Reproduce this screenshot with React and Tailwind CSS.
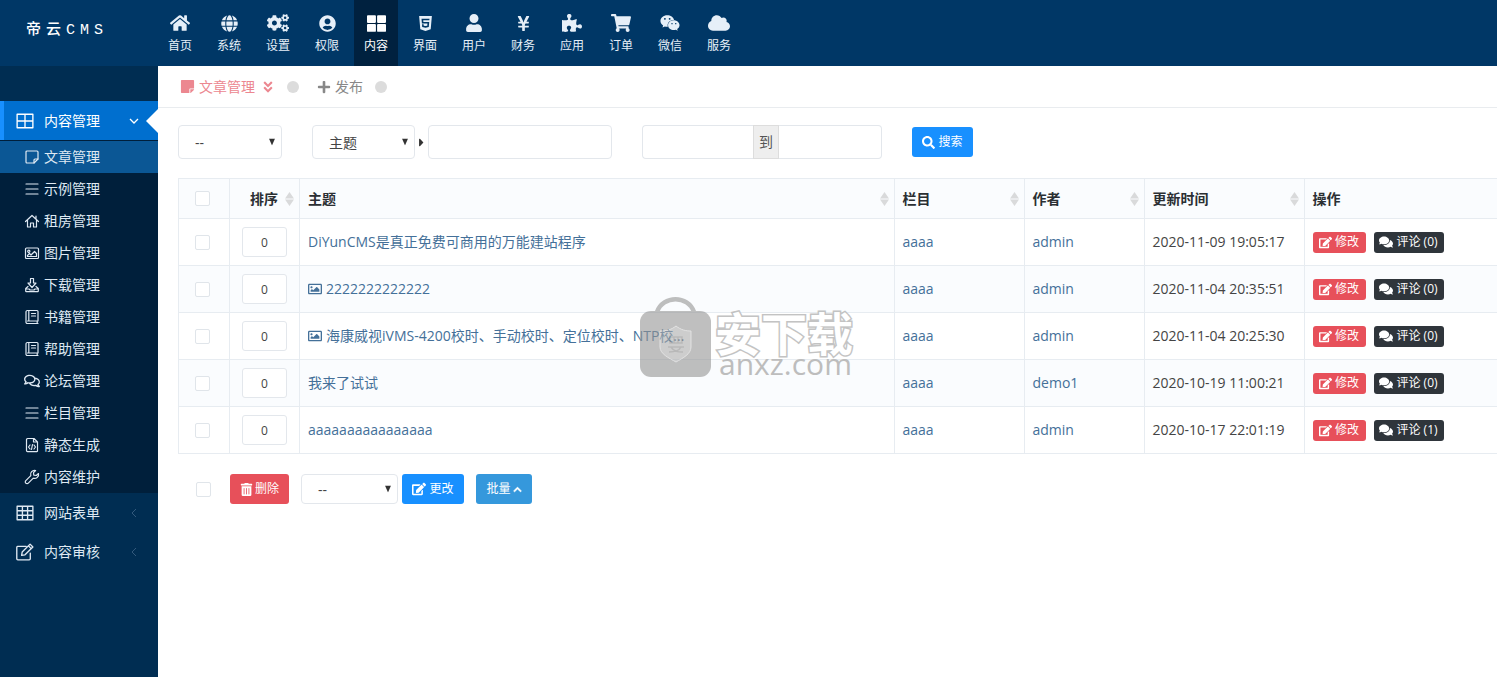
import {
  FaCaretRight,
  FaChevronUp,
  FaCloud,
  FaCogs,
  FaComments,
  FaEdit,
  FaGlobe,
  FaHome,
  FaHtml5,
  FaPlus,
  FaPuzzlePiece,
  FaRegComments,
  FaRegImage,
  FaSearch,
  FaShoppingCart,
  FaStickyNote,
  FaThLarge,
  FaTrashAlt,
  FaUser,
  FaUserCircle,
  FaWeixin,
  FaYenSign,
  FaAngleDoubleDown,
} from "react-icons/fa";

const navItems = [
  { icon: <FaHome size={20} />, label: "首页" },
  { icon: <FaGlobe size={17} />, label: "系统" },
  { icon: <FaCogs size={22} />, label: "设置" },
  { icon: <FaUserCircle size={17} />, label: "权限" },
  { icon: <FaThLarge size={19} />, label: "内容", active: true },
  { icon: <FaHtml5 size={17} />, label: "界面" },
  { icon: <FaUser size={18} />, label: "用户" },
  { icon: <FaYenSign size={17} />, label: "财务" },
  { icon: <FaPuzzlePiece size={20} />, label: "应用" },
  { icon: <FaShoppingCart size={20} />, label: "订单" },
  { icon: <FaWeixin size={20} />, label: "微信" },
  { icon: <FaCloud size={22} />, label: "服务" },
];

function LineIcon({ size = 16, children }) {
  return (
    <svg
      width={size}
      height={size}
      viewBox="0 0 16 16"
      fill="none"
      stroke="currentColor"
      strokeWidth="1.2"
      strokeLinecap="round"
      strokeLinejoin="round"
      aria-hidden="true"
    >
      {children}
    </svg>
  );
}

const noteIcon = (
  <LineIcon>
    <path d="M3 2h10a1 1 0 0 1 1 1v7l-4 4H3a1 1 0 0 1-1-1V3a1 1 0 0 1 1-1z" />
    <path d="M14 10h-3a1 1 0 0 0-1 1v3" />
  </LineIcon>
);

const barsIcon = (
  <LineIcon>
    <path d="M2 3h12M2 8h12M2 13h12" />
  </LineIcon>
);

const houseIcon = (
  <LineIcon>
    <path d="M1.5 8.5 8 2.5l6.500 6M12 3v3M3.500 7v7H6.500v-4h3v4h3V7" />
  </LineIcon>
);

const imageIcon = (
  <LineIcon>
    <rect x="1.500" y="3" width="13" height="10.500" rx="1" />
    <circle cx="4.800" cy="6.200" r="1.100" />
    <path d="M3.500 11.500v-1l2-2 1.500 1.500 3.500-3.500 2 2v3z" />
  </LineIcon>
);

const downloadIcon = (
  <LineIcon>
    <path d="M6.500 1.500h3V6H12l-4 4.500L4 6h2.500z" />
    <path d="M4 9.500 1.700 11.500V14a.6.6 0 0 0 .6.6h11.400a.6.6 0 0 0 .6-.6v-2.500L12 9.500M2 12h3l1 1h4l1-1h3" />
  </LineIcon>
);

const bookIcon = (
  <LineIcon>
    <path d="M3.500 1.500H13a1 1 0 0 1 1 1v9.500H3.500M3.500 1.500A1.500 1.500 0 0 0 2 3v9.500a1.500 1.500 0 0 0 1.500 2H14M13.200 12v2.500M4.800 1.500V12M7.500 4.500h4M7.500 7h4" />
  </LineIcon>
);

const fileCodeIcon = (
  <LineIcon>
    <path d="M3.500 1.500H10l3.500 3.500v9a.6.6 0 0 1-.6.6H3.500a1 1 0 0 1-1-1v-11a1 1 0 0 1 1-1zM9.500 1.500V5h4" />
    <path d="m6 8-1.500 2L6 12M8.500 7.500l-1 5M10 8l1.500 2-1.500 2" />
  </LineIcon>
);

const wrenchIcon = (
  <LineIcon>
    <path d="M14.500 4.500 12.300 6.500 9.800 6.200 9.500 3.700 11.600 1.500A4 4 0 0 0 6.800 6.700L1.800 11.700a1.700 1.700 0 0 0 2.500 2.500l5-5A4 4 0 0 0 14.500 4.500z" />
  </LineIcon>
);

const subItems = [
  { icon: noteIcon, label: "文章管理", active: true },
  { icon: barsIcon, label: "示例管理" },
  { icon: houseIcon, label: "租房管理" },
  { icon: imageIcon, label: "图片管理" },
  { icon: downloadIcon, label: "下载管理" },
  { icon: bookIcon, label: "书籍管理" },
  { icon: bookIcon, label: "帮助管理" },
  { icon: <FaRegComments size={16} />, label: "论坛管理" },
  { icon: barsIcon, label: "栏目管理" },
  { icon: fileCodeIcon, label: "静态生成" },
  { icon: wrenchIcon, label: "内容维护" },
];

const rows = [
  { title: "DiYunCMS是真正免费可商用的万能建站程序", author: "admin", time: "2020-11-09 19:05:17", comments: 0 },
  { title: "2222222222222", image: true, author: "admin", time: "2020-11-04 20:35:51", comments: 0 },
  { title: "海康威视iVMS-4200校时、手动校时、定位校时、NTP校...", image: true, author: "admin", time: "2020-11-04 20:25:30", comments: 0 },
  { title: "我来了试试", author: "demo1", time: "2020-10-19 11:00:21", comments: 0 },
  { title: "aaaaaaaaaaaaaaaa", author: "admin", time: "2020-10-17 22:01:19", comments: 1 },
];

function Header() {
  return (
    <header className="flex h-[66px] bg-[#003766] text-[#e6eff8]">
      <a href="#" className="flex w-[158px] shrink-0 items-center pb-1 pl-[26px] font-['Liberation_Mono','Noto_Sans_CJK_SC',monospace] text-[15px] font-medium tracking-[5px] text-white">
        帝云CMS
      </a>
      <nav className="flex gap-[5px]">
        {navItems.map((item) => (
          <a
            key={item.label}
            href="#"
            className={
              item.active
                ? "flex w-11 flex-col items-center bg-[#00213f] pt-2.5 text-xs text-white"
                : "flex w-11 flex-col items-center pt-2.5 text-xs"
            }
          >
            <span className="flex h-[26px] items-center">{item.icon}</span>
            <span className="leading-5">{item.label}</span>
          </a>
        ))}
      </nav>
    </header>
  );
}

function SideGroup({ icon, label }) {
  return (
    <a href="#" className="flex h-[39px] items-center pl-4">
      <span className="w-7">{icon}</span>
      <span className="flex-1">{label}</span>
      <svg width="8" height="10" viewBox="0 0 8 10" fill="none" stroke="#33597c" className="mr-5" aria-hidden="true">
        <path d="M6 1 2 5l4 4" />
      </svg>
    </a>
  );
}

function Sidebar() {
  return (
    <aside className="w-[158px] shrink-0 bg-[#002d52] pt-[35px] text-sm text-[#dfe9f3]">
      <a href="#" className="relative flex h-[39px] items-center border-l-4 border-[#1890ff] bg-[#006fcf] pl-3 text-white">
        <span className="w-7">
          <LineIcon size={18}>
            <path d="M1 2h14v12H1zM8 2v12M1 8h14" />
          </LineIcon>
        </span>
        <span className="flex-1">内容管理</span>
        <svg width="10" height="8" viewBox="0 0 10 8" fill="none" stroke="currentColor" strokeWidth="1.300" className="mr-[19px]" aria-hidden="true">
          <path d="m1 2 4 4 4-4" />
        </svg>
        <svg width="12" height="24" viewBox="0 0 12 24" fill="#fff" className="absolute top-2 right-0" aria-hidden="true">
          <path d="M12 0 0 12l12 12z" />
        </svg>
      </a>
      <ul className="border-t border-[#001f3b] bg-[#001f3b]">
        {subItems.map((item) => (
          <li key={item.label}>
            <a
              href="#"
              className={
                item.active
                  ? "flex h-8 items-center gap-1 bg-[#0b5795] pl-6"
                  : "flex h-8 items-center gap-1 pl-6"
              }
            >
              {item.icon}
              {item.label}
            </a>
          </li>
        ))}
      </ul>
      <SideGroup
        label="网站表单"
        icon={
          <LineIcon size={18}>
            <path d="M1 2h14v12H1zM5.700 2v12M10.300 2v12M1 6h14M1 10h14" />
          </LineIcon>
        }
      />
      <SideGroup
        label="内容审核"
        icon={
          <LineIcon size={18}>
            <path d="M9 3H1.500A1 1 0 0 0 .7 4v10a1 1 0 0 0 1 1h10a1 1 0 0 0 1-1V9M5 11l.5-3L12.500 1l2.500 2.500-7 7zM11 2.500 13.500 5" />
          </LineIcon>
        }
      />
    </aside>
  );
}

function Select({ label, value, className }) {
  return (
    <div className={className}>
      <select
        aria-label={label}
        className="h-full w-full appearance-none rounded border border-[#e3e7ec] bg-white pt-0.5 pl-4 text-sm text-[#444]"
      >
        <option>{value}</option>
      </select>
      <svg width="6" height="7" viewBox="0 0 6 7" fill="#333" className="pointer-events-none absolute top-1/2 right-[7px] -translate-y-1/2" aria-hidden="true">
        <path d="M0 0h6L3 7z" />
      </svg>
    </div>
  );
}

function CheckBox({ label }) {
  return (
    <input
      type="checkbox"
      aria-label={label}
      className="block h-[15px] w-[15px] appearance-none rounded-xs border border-[#e0e5ea] bg-white checked:bg-[#1890ff]"
    />
  );
}

function SortHeader({ children }) {
  return (
    <th className="border border-[#e7ecf1] px-2 text-left font-bold">
      <div className="flex items-center justify-between">
        {children}
        <svg width="9" height="14" viewBox="0 0 9 14" fill="#d9dadb" className="-mr-[3px] shrink-0" aria-hidden="true">
          <path d="M4.500 0 9 6.500H0zM4.500 14 0 7.500h9z" />
        </svg>
      </div>
    </th>
  );
}

function Filters() {
  return (
    <form className="flex items-center px-5 pt-[17px]" onSubmit={(e) => e.preventDefault()}>
      <Select label="栏目" value="--" className="relative h-[34px] w-[104px]" />
      <Select label="字段" value="主题" className="relative ml-[30px] h-[34px] w-[103px]" />
      <FaCaretRight size={13} className="text-[#333]" />
      <input aria-label="关键词" className="h-[34px] w-[184px] rounded border border-[#e3e7ec] px-3 text-sm" />
      <div className="ml-[30px] flex h-[34px] w-60">
        <input aria-label="开始时间" className="min-w-0 flex-1 rounded-l border border-r-0 border-[#e3e7ec] px-3 text-sm" />
        <span className="flex w-[26px] items-center justify-center border border-[#ddd] bg-[#eee] text-sm text-[#555]">到</span>
        <input aria-label="结束时间" className="w-[103px] rounded-r border border-l-0 border-[#e3e7ec] px-3 text-sm" />
      </div>
      <button className="ml-[30px] flex h-[30px] w-[61px] items-center justify-center gap-[3px] rounded-[3px] bg-[#1890ff] text-xs text-white">
        <FaSearch size={13} />
        搜索
      </button>
    </form>
  );
}

function ArticleTable() {
  return (
    <table className="w-full table-fixed border-collapse text-sm text-[#444]">
      <colgroup>
        <col className="w-[51px]" />
        <col className="w-[70px]" />
        <col />
        <col className="w-[130px]" />
        <col className="w-[120px]" />
        <col className="w-40" />
        <col className="w-[193px]" />
      </colgroup>
      <thead className="text-[#2b2f33]">
        <tr className="h-10 bg-[#fafcfe]">
          <th className="border border-[#e7ecf1] pl-4">
            <CheckBox label="全选" />
          </th>
          <SortHeader>
            <span className="pl-3">排序</span>
          </SortHeader>
          <SortHeader>主题</SortHeader>
          <SortHeader>栏目</SortHeader>
          <SortHeader>作者</SortHeader>
          <SortHeader>更新时间</SortHeader>
          <th className="border-y border-[#e7ecf1] px-2 text-left font-bold">操作</th>
        </tr>
      </thead>
      <tbody>
        {rows.map((row) => (
          <tr key={row.time} className="h-[47px] even:bg-[#fafcfe]">
            <td className="border border-[#e7ecf1] pl-4">
              <CheckBox label={row.title} />
            </td>
            <td className="border border-[#e7ecf1] pl-3">
              <input
                aria-label="排序"
                defaultValue="0"
                className="block h-[30px] w-[45px] rounded-[3px] border border-[#e3e7ec] bg-white text-center text-xs"
              />
            </td>
            <td className="border border-[#e7ecf1] px-2">
              <a href="#" className="flex items-center gap-1 whitespace-nowrap text-[#447099]">
                {row.image && <FaRegImage size={14} className="shrink-0" />}
                {row.title}
              </a>
            </td>
            <td className="border border-[#e7ecf1] px-2">
              <a href="#" className="text-[#447099]">aaaa</a>
            </td>
            <td className="border border-[#e7ecf1] px-2">
              <a href="#" className="text-[#447099]">{row.author}</a>
            </td>
            <td className="border border-[#e7ecf1] px-2 whitespace-nowrap">{row.time}</td>
            <td className="border-y border-[#e7ecf1] px-2">
              <div className="flex gap-2 text-xs text-white">
                <a href="#" className="flex h-[21px] w-[53px] items-center justify-center gap-[3px] rounded-[3px] bg-[#e7505a]">
                  <FaEdit size={13} />
                  修改
                </a>
                <a href="#" className="flex h-[21px] w-[70px] items-center justify-center gap-[3px] rounded-[3px] bg-[#2f353b] whitespace-nowrap">
                  <FaComments size={14} />
                  评论 ({row.comments})
                </a>
              </div>
            </td>
          </tr>
        ))}
      </tbody>
    </table>
  );
}

function Watermark() {
  return (
    <div className="pointer-events-none absolute top-[119px] left-[462px] flex gap-1">
      <svg width="71" height="81" viewBox="0 0 71 81" className="opacity-60" aria-hidden="true">
        <path d="M17 15C23-2 48-2 54 15" fill="none" stroke="#959595" strokeWidth="4.5" />
        <rect y="14" width="71" height="66" rx="11" fill="#959595" />
        <path d="M36 29c5 4 10 5 15 5v16c0 7-8 11-15 15-7-4-16-8-16-15V34c6 0 11-1 16-5z" fill="#adadad" stroke="#d0d0d0" />
        <path d="M30 40h12v6H30zM34 40v6M38 40v6M28 50h16M31 50c3 5 7 5 12 5M41 50c-2 4-7 5-12 5" fill="none" stroke="#8a8a8a" strokeWidth="1.500" />
      </svg>
      <div className="flex flex-col pt-[15px] font-['Open_Sans','Noto_Sans_CJK_SC',sans-serif]">
        <div className="text-[46px] leading-[42px] font-bold text-white opacity-90 [-webkit-text-stroke:3px_#bdbdbd] [paint-order:stroke_fill] [stroke-linejoin:round]">
          安下载
        </div>
        <div className="pl-1 text-3xl leading-5 font-medium text-[#bdbdbd]">anxz.com</div>
      </div>
    </div>
  );
}

export default function App() {
  return (
    <div className="flex min-h-screen flex-col bg-white font-['Open_Sans','Noto_Sans_CJK_SC',sans-serif]">
      <Header />
      <div className="flex flex-1">
        <Sidebar />
        <main className="min-w-0 flex-1">
          {/* Page tabs */}
          <div className="flex h-[42px] items-center border-b border-[#e9ecef] px-[22px] text-sm text-[#888]">
            <a href="#" className="flex items-center gap-1 text-[#ec8790]">
              <FaStickyNote size={15} />
              文章管理
              <FaAngleDoubleDown size={14} className="ml-0.5" />
            </a>
            <span className="ml-3 h-3 w-3 rounded-full bg-[#dcdcdc]" />
            <a href="#" className="ml-[18px] flex items-center gap-1">
              <FaPlus size={14} />
              发布
            </a>
            <span className="ml-3 h-3 w-3 rounded-full bg-[#dcdcdc]" />
          </div>

          <Filters />

          <div className="relative mt-[19px] ml-5">
            <ArticleTable />
            <Watermark />
          </div>

          {/* Bulk actions */}
          <div className="mt-5 ml-[38px] flex items-center text-xs text-white">
            <CheckBox label="全选" />
            <button className="ml-[19px] flex h-[30px] w-[59px] items-center justify-center gap-0.5 rounded-[3px] bg-[#e7505a]">
              <FaTrashAlt size={13} />
              删除
            </button>
            <Select label="移动到" value="--" className="relative ml-3 h-[30px] w-[97px]" />
            <button className="ml-1 flex h-[30px] w-[62px] items-center justify-center gap-[3px] rounded-[3px] bg-[#1890ff]">
              <FaEdit size={14} />
              更改
            </button>
            <button className="ml-3 flex h-[30px] w-14 items-center justify-center gap-0.5 rounded-[3px] bg-[#3598dc]">
              批量
              <FaChevronUp size={9} stroke="currentColor" strokeWidth="30" />
            </button>
          </div>
        </main>
      </div>
    </div>
  );
}
